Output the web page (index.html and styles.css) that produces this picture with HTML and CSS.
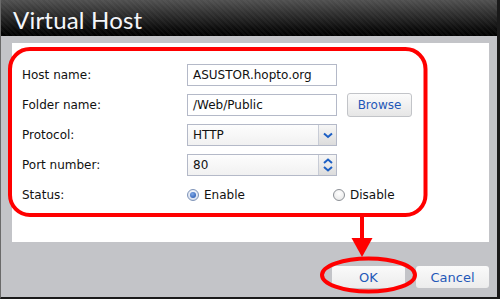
FILE: index.html
```html
<!DOCTYPE html>
<html lang="en">
<head>
    <meta charset="UTF-8">
    <title>Virtual Host</title>
    <link rel="stylesheet" href="styles.css">
</head>
<body>
    <div class="window">
        <div class="titlebar">Virtual Host</div>
        <div class="window-body">
            <div class="panel">
                <div class="form">
                    <label class="label">Host name:</label>
                    <div class="field"><div class="input">ASUSTOR.hopto.org</div></div>

                    <label class="label">Folder name:</label>
                    <div class="field">
                        <div class="input">/Web/Public</div>
                        <button class="btn browse">Browse</button>
                    </div>

                    <label class="label">Protocol:</label>
                    <div class="field">
                        <div class="input select">
                            <span class="value">HTTP</span>
                            <span class="side">
                                <svg width="10" height="7" viewBox="0 0 10 7"><path d="M1 1.5 L5 5 L9 1.5" fill="none" stroke="#1c5fc4" stroke-width="2"/></svg>
                            </span>
                        </div>
                    </div>

                    <label class="label">Port number:</label>
                    <div class="field">
                        <div class="input select">
                            <span class="value">80</span>
                            <span class="side spin">
                                <svg width="10" height="6" viewBox="0 0 10 6"><path d="M1 5 L5 1.5 L9 5" fill="none" stroke="#1c5fc4" stroke-width="2"/></svg>
                                <svg width="10" height="6" viewBox="0 0 10 6"><path d="M1 1 L5 4.5 L9 1" fill="none" stroke="#1c5fc4" stroke-width="2"/></svg>
                            </span>
                        </div>
                    </div>

                    <label class="label">Status:</label>
                    <div class="field radios">
                        <span class="radio-opt"><span class="radio checked"></span>Enable</span>
                        <span class="radio-opt"><span class="radio"></span>Disable</span>
                    </div>
                </div>
            </div>
            <div class="footer">
                <button class="btn action">OK</button>
                <button class="btn action">Cancel</button>
            </div>
        </div>

        <!-- red annotation marks drawn over the dialog -->
        <svg class="marks" width="500" height="299" viewBox="0 0 500 299">
            <rect x="10" y="49" width="415.5" height="166" rx="20" fill="none" stroke="#ff0000" stroke-width="4"/>
            <line x1="362" y1="215" x2="362" y2="242" stroke="#ff0000" stroke-width="4"/>
            <polygon points="351.5,238 372.5,238 362,257" fill="#ff0000"/>
            <ellipse cx="368.5" cy="275" rx="46.5" ry="16.5" fill="none" stroke="#ff0000" stroke-width="4"/>
        </svg>
    </div>
</body>
</html>
```

FILE: styles.css
```css
* {
    margin: 0;
    padding: 0;
    box-sizing: border-box;
}

body {
    font-family: 'DejaVu Sans', Verdana, sans-serif;
    font-size: 12px;
    color: #111;
    background: #fff;
}

.window {
    position: relative;
    width: 500px;
    height: 299px;
    display: flex;
    flex-direction: column;
    background: #c3c4c8;
    border-left: 1px solid #6a6a6a;
    border-right: 3px solid #1a1a1a;
    border-bottom: 2px solid #1a1a1a;
}

.titlebar {
    height: 36px;
    flex: none;
    padding: 5px 0 0 12px;
    font-family: 'Lato', 'Open Sans', sans-serif;
    font-size: 24px;
    font-weight: 400;
    letter-spacing: 0.2px;
    color: #f4f6fa;
    background:
        repeating-linear-gradient(45deg, rgba(255, 255, 255, 0.03) 0 2px, transparent 2px 4px),
        linear-gradient(#505050, #2a2a2a 45%, #080808 85%, #000);
}

.window-body {
    flex: 1;
    display: flex;
    flex-direction: column;
    padding: 7px 8px 0 11px;
}

.panel {
    background: #fff;
    height: 199px;
    padding: 21px 0 0 10px;
}

.form {
    display: grid;
    grid-template-columns: 165px 1fr;
    grid-auto-rows: 22px;
    row-gap: 8px;
    align-items: center;
}

.label {
    color: #111;
}

.field {
    display: flex;
    align-items: center;
    gap: 10px;
    height: 22px;
}

.input {
    width: 150px;
    height: 22px;
    border: 1px solid #b4b9c8;
    background: #fff;
    padding: 0 5px;
    line-height: 20px;
    color: #111;
}

.select {
    display: flex;
    padding: 0 0 0 5px;
    background: linear-gradient(#fdfdfd, #f1f1f1);
}

.select .value {
    flex: 1;
}

.side {
    width: 18px;
    border-left: 1px solid #c8ccd6;
    background: linear-gradient(#f6f6f6, #dcdcdc);
    display: flex;
    align-items: center;
    justify-content: center;
}

.spin {
    flex-direction: column;
    gap: 2px;
}

.btn {
    font-family: 'DejaVu Sans', Verdana, sans-serif;
    font-size: 12px;
    color: #1f58b8;
    border: 1px solid #d2d4d8;
    border-radius: 3px;
    background: linear-gradient(#fbfbfb, #e6e6e6);
}

.browse {
    width: 65px;
    height: 24px;
    border-color: #c2c4c8;
}

.radios {
    display: grid;
    grid-template-columns: 146px auto;
    gap: 0;
}

.radio-opt {
    display: flex;
    align-items: center;
    gap: 5px;
}

.radio {
    width: 12px;
    height: 12px;
    border-radius: 50%;
    border: 1px solid #8c9096;
    background: radial-gradient(circle at 50% 35%, #ffffff, #e4e4e4);
    display: flex;
    align-items: center;
    justify-content: center;
}

.radio.checked {
    border-color: #7f94b8;
    background: radial-gradient(circle at 50% 35%, #ffffff, #c8d4ea);
}

.radio.checked::after {
    content: "";
    width: 6px;
    height: 6px;
    border-radius: 50%;
    background: radial-gradient(circle at 40% 35%, #7fa8e8, #1d4fa8);
}

.footer {
    display: flex;
    justify-content: flex-end;
    gap: 11px;
    padding-top: 24px;
}

.action {
    width: 73px;
    height: 22px;
    font-size: 13px;
    border: none;
    background: linear-gradient(#fafafa, #ececec);
}

.marks {
    position: absolute;
    left: -1px;
    top: 0;
    pointer-events: none;
}
```
